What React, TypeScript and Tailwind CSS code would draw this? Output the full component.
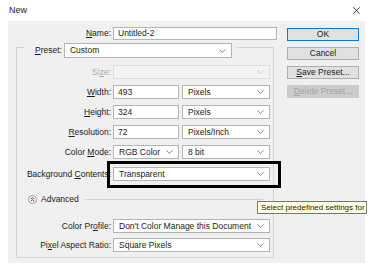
import React from "react";

const font = "font-['Liberation_Sans',Arial,sans-serif]";

function Chevron({ muted = false }: { muted?: boolean }) {
  return (
    <svg width="7" height="4" viewBox="0 0 7 4" className="shrink-0">
      <path
        d="M0.5 0.5 L3.5 3.3 L6.5 0.5"
        fill="none"
        stroke={muted ? "#c4c4c4" : "#7a7a7a"}
        strokeWidth="0.9"
      />
    </svg>
  );
}

function Select({
  value,
  w,
  disabled = false,
  h = "h-[14px]",
}: {
  value?: string;
  w: string;
  disabled?: boolean;
  h?: string;
}) {
  return (
    <div
      className={`${w} ${h} flex items-center justify-between pl-[5px] pr-[5px] border ${
        disabled ? "bg-[#f3f3f3] border-[#dcdcdc]" : "bg-white border-[#b4b4b4]"
      }`}
    >
      <span className="whitespace-nowrap leading-none">{value}</span>
      <Chevron muted={disabled} />
    </div>
  );
}

function Input({ value, w, h = "h-[14px]" }: { value: string; w: string; h?: string }) {
  return (
    <div className={`${w} ${h} flex items-center pl-[4px] bg-white border border-[#b4b4b4]`}>
      <span className="leading-none">{value}</span>
    </div>
  );
}

function Label({ children, muted = false }: { children: React.ReactNode; muted?: boolean }) {
  return (
    <div
      className={`w-[94px] text-right whitespace-nowrap leading-none ${
        muted ? "text-[#a8a8a8]" : "text-[#1b1b1b]"
      }`}
    >
      {children}
    </div>
  );
}

function Row({ label, children, muted = false, className = "" }: { label: React.ReactNode; children: React.ReactNode; muted?: boolean; className?: string }) {
  return (
    <div className={`flex items-center gap-[2px] ${className}`}>
      <Label muted={muted}>{label}</Label>
      {children}
    </div>
  );
}

function Btn({ children, primary = false, disabled = false }: { children: React.ReactNode; primary?: boolean; disabled?: boolean }) {
  return (
    <div
      className={`h-[13px] w-[72px] flex items-center justify-center leading-none border ${
        primary
          ? "bg-[#e1e1e1] border-[#0078d7]"
          : disabled
          ? "bg-[#cccccc] border-[#cccccc] text-[#a3a3a3]"
          : "bg-[#e1e1e1] border-[#adadad]"
      }`}
    >
      {children}
    </div>
  );
}

export default function App() {
  return (
    <div className={`relative w-[380px] h-[277px] bg-white overflow-hidden text-[8.5px] text-[#1b1b1b] ${font}`}>
      {/* title bar */}
      <div className="h-[21px] flex items-center justify-between pl-[9px] pr-[20px]">
        <span className="text-[9px] leading-none pb-[1px]">New</span>
        <svg width="7" height="7" viewBox="0 0 7 7">
          <path d="M0.3 0.3 L6.7 6.7 M6.7 0.3 L0.3 6.7" stroke="#222" strokeWidth="0.9" />
        </svg>
      </div>

      {/* dialog body */}
      <div className="ml-[8px] w-[357px] h-[242px] bg-[#f0f0f0] flex">
        <div className="w-[269px] flex flex-col">
          <div className="flex items-center gap-[2px] pt-[6px]">
            <div className="w-[103px] text-right leading-none">
              <span className="underline">N</span>ame:
            </div>
            <Input value="Untitled-2" w="w-[164px]" h="h-[13px]" />
          </div>

          <fieldset className="mt-[3px] ml-[8px] w-[258px] border border-[#d4d4d4] pb-[5px]">
            <legend className="ml-[7px] h-[8px] pl-[11px] pr-[4px]">
              <div className="flex items-center gap-[2px] h-[15px]">
                <span className="leading-none">
                  <span className="underline">P</span>reset:
                </span>
                <Select value="Custom" w="w-[168px]" h="h-[15px]" />
              </div>
            </legend>

            <div className="flex flex-col">
              <Row muted className="mt-[14px]" label={<>Si<span className="underline">z</span>e:</>}>
                <Select w="w-[157px]" disabled />
              </Row>
              <Row className="mt-[6px]" label={<><span className="underline">W</span>idth:</>}>
                <Input value="493" w="w-[66px]" />
                <div className="ml-[1px]">
                  <Select value="Pixels" w="w-[88px]" />
                </div>
              </Row>
              <Row className="mt-[6px]" label={<><span className="underline">H</span>eight:</>}>
                <Input value="324" w="w-[66px]" />
                <div className="ml-[1px]">
                  <Select value="Pixels" w="w-[88px]" />
                </div>
              </Row>
              <Row className="mt-[6px]" label={<><span className="underline">R</span>esolution:</>}>
                <Input value="72" w="w-[66px]" />
                <div className="ml-[1px]">
                  <Select value="Pixels/Inch" w="w-[88px]" />
                </div>
              </Row>
              <Row className="mt-[6px]" label={<>Color <span className="underline">M</span>ode:</>}>
                <Select value="RGB Color" w="w-[66px]" />
                <div className="ml-[1px]">
                  <Select value="8 bit" w="w-[88px]" />
                </div>
              </Row>
              <Row className="mt-[8px]" label={<>Background <span className="underline">C</span>ontents:</>}>
                <div className="relative">
                  <Select value="Transparent" w="w-[157px]" />
                  <div className="absolute -left-[6px] -top-[6px] -right-[11px] -bottom-[7px] border-[3px] border-black" />
                </div>
              </Row>

              <div className="mt-[13px] h-[10px] flex items-center pl-[11px] pr-[10px]">
                <svg width="9" height="9" viewBox="0 0 9 9" className="shrink-0">
                  <circle cx="4.5" cy="4.5" r="4" fill="#f6f6f6" stroke="#8a8a8a" strokeWidth="0.8" />
                  <path d="M2.8 4.2 L4.5 2.6 L6.2 4.2 M2.8 6.2 L4.5 4.6 L6.2 6.2" fill="none" stroke="#333" strokeWidth="0.8" />
                </svg>
                <span className="ml-[4px] leading-none">Advanced</span>
                <div className="ml-[6px] flex-1 h-px bg-[#d4d4d4]" />
              </div>

              <Row className="mt-[15px]" label={<>Color Pr<span className="underline">o</span>file:</>}>
                <Select value="Don't Color Manage this Document" w="w-[157px]" />
              </Row>
              <Row className="mt-[5px]" label={<>Pi<span className="underline">x</span>el Aspect Ratio:</>}>
                <Select value="Square Pixels" w="w-[157px]" />
              </Row>
            </div>
          </fieldset>
        </div>

        <div className="ml-[10px] pt-[7px] flex flex-col gap-[6px]">
          <Btn primary>OK</Btn>
          <Btn>Cancel</Btn>
          <Btn>
            <span className="underline">S</span>ave Preset...
          </Btn>
          <Btn disabled>
            <span className="underline">D</span>elete Preset...
          </Btn>
        </div>
      </div>

      {/* tooltip */}
      <div className="absolute left-[257px] top-[201px] w-[110px] h-[13px] flex items-center pl-[3px] bg-[#ffffe1] border border-[#767676] text-[8px] leading-none whitespace-nowrap">
        Select predefined settings for
      </div>
    </div>
  );
}
